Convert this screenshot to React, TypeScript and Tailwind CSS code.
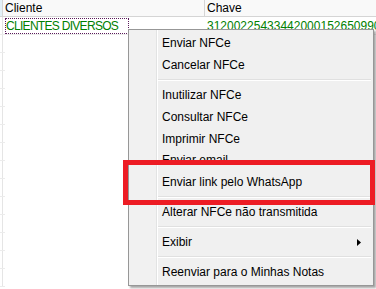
import React from 'react';

type MenuEntry = { label?: string; sep?: boolean; sub?: boolean };

const entries: MenuEntry[] = [
  { label: 'Enviar NFCe' },
  { label: 'Cancelar NFCe' },
  { sep: true },
  { label: 'Inutilizar NFCe' },
  { label: 'Consultar NFCe' },
  { label: 'Imprimir NFCe' },
  { label: 'Enviar email' },
  { label: 'Enviar link pelo WhatsApp' },
  { sep: true },
  { label: 'Alterar NFCe não transmitida' },
  { sep: true },
  { label: 'Exibir', sub: true },
  { sep: true },
  { label: 'Reenviar para o Minhas Notas' },
];

function ContextMenu() {
  return (
    <div className="absolute left-[128px] top-[29px] w-[246px] h-[257px] flex border border-[#979797] bg-[#f0f0f0] shadow-[2px_2px_2px_rgba(0,0,0,0.35)]">
      {/* gutter for icons */}
      <div className="w-[28px] h-full bg-[#f1f1f1] border-r border-[#e2e3e3]" />
      <div className="w-px h-full bg-white" />
      <div className="flex-1 flex flex-col py-[2px] pr-[2px]">
        {entries.map((e, i) =>
          e.sep ? (
            <div key={i} className="h-[8px] flex flex-col justify-center">
              <div className="h-px bg-[#e0e0e0]" />
              <div className="h-px bg-white" />
            </div>
          ) : (
            <div key={i} className="h-[22px] flex items-center pl-[4px] pr-[8px] text-black">
              <span className="flex-1 whitespace-nowrap">{e.label}</span>
              {e.sub && (
                <svg width="4" height="7" viewBox="0 0 4 7" className="mr-[2px]">
                  <path d="M0 0 L4 3.5 L0 7 Z" fill="#000" />
                </svg>
              )}
            </div>
          )
        )}
      </div>
    </div>
  );
}

export default function App() {
  const rows = Array.from({ length: 14 });
  return (
    <div className="relative w-[376px] h-[289px] overflow-hidden bg-white text-[12px] leading-none font-['Liberation_Sans',Arial,sans-serif]">
      {/* header */}
      <div className="flex h-[17px] bg-[#f9f9f9] border-b border-[#d5d5d5]">
        <div className="w-[3px] bg-[#e3f1f8] border-r border-[#d5d5d5]" />
        <div className="w-[202px] flex items-center pl-[2px] border-r border-[#d5d5d5] text-black">Cliente</div>
        <div className="flex-1 flex items-center pl-[2px] text-black">Chave</div>
      </div>
      {/* first row */}
      <div className="flex h-[18px] border-b border-[#ececec]">
        <div className="w-[3px] border-r border-[#e5e5e5]" />
        <div className="w-[202px] pl-[2px] pt-[1px]">
          <div className="w-[124px] h-[16px] flex items-center pl-[1px] whitespace-nowrap tracking-[-0.7px] text-[#008000] outline-1 outline-dotted outline-[#5a1a5a] -outline-offset-1">
            CLIENTES DIVERSOS
          </div>
        </div>
        <div className="flex-1 flex items-center pl-[2px] overflow-hidden whitespace-nowrap text-[#008000]">
          31200225433442000152650990000
        </div>
      </div>
      {rows.map((_, i) => (
        <div key={i} className="flex h-[18px] border-b border-[#ececec] w-[5px]">
          <div className="w-[3px] border-r border-[#e5e5e5]" />
        </div>
      ))}

      <ContextMenu />

      {/* highlight annotation */}
      <div className="absolute left-[123px] top-[160px] w-[252px] h-[45px] border-[5px] border-[#ed1c24]" />
    </div>
  );
}
